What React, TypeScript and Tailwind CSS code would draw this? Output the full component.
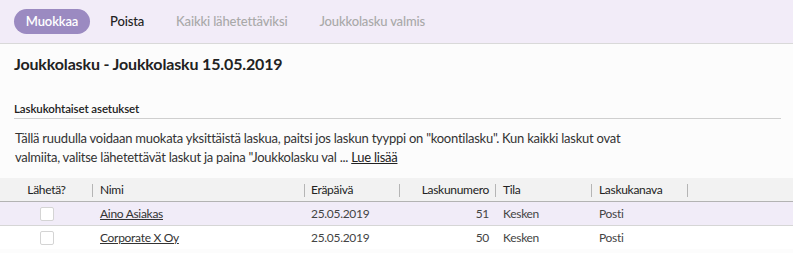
const rows = [
  { name: 'Aino Asiakas', due: '25.05.2019', num: '51', state: 'Kesken', channel: 'Posti' },
  { name: 'Corporate X Oy', due: '25.05.2019', num: '50', state: 'Kesken', channel: 'Posti' },
];

const cols = 'grid grid-cols-[93px_212px_95px_96px_96px_96px_1fr]';

function HeaderCell({ children, className = '' }: { children?: React.ReactNode; className?: string }) {
  return (
    <div className={`relative flex items-center h-full ${className}`}>
      {children}
      <span className="absolute right-0 top-[6px] h-[13px] w-px bg-[#b5b5b5]" />
    </div>
  );
}

export default function App() {
  return (
    <div className="w-[793px] h-[253px] bg-[#fcfcfc] text-[#333] font-['Lato','Noto_Sans',sans-serif] overflow-hidden">
      {/* toolbar */}
      <div className="h-[44px] bg-[#f2ecf8] border-b border-[#d9d9d9] flex items-center pl-[14px] text-[13px] tracking-[-0.15px]">
        <button className="h-[25px] w-[76px] rounded-full bg-[#9b8ac1] text-white font-semibold">Muokkaa</button>
        <span className="ml-[20px] text-[#222] font-medium">Poista</span>
        <span className="ml-[32px] text-[#a9a9a9] font-medium">Kaikki lähetettäviksi</span>
        <span className="ml-[32px] text-[#a9a9a9] font-medium">Joukkolasku valmis</span>
      </div>

      <div className="px-[14px]">
        <h1 className="mt-[9px] text-[16px] tracking-[-0.15px] font-bold text-[#222] leading-[22px]">
          Joukkolasku - Joukkolasku 15.05.2019
        </h1>
        <div className="mt-[25px] border-b border-[#cfcfcf] pb-[1px] mr-[-2px] text-[11.5px] tracking-[-0.1px] font-semibold text-[#222]">
          Laskukohtaiset asetukset
        </div>
        <p className="mt-[10px] pl-px text-[13px] tracking-[-0.25px] leading-[19px] text-[#333]">
          Tällä ruudulla voidaan muokata yksittäistä laskua, paitsi jos laskun tyyppi on "koontilasku". Kun kaikki laskut ovat
          <br />
          valmiita, valitse lähetettävät laskut ja paina "Joukkolasku val ... <span className="underline text-[#222]">Lue lisää</span>
        </p>
      </div>

      {/* table */}
      <div className="mt-[11px] text-[12px] tracking-[-0.3px]">
        <div className={`${cols} h-[24px] bg-[#f2f2f2] border-b border-[#b3b3b3] text-[#222]`}>
          <HeaderCell className="justify-center">Lähetä?</HeaderCell>
          <HeaderCell className="pl-[7px]">Nimi</HeaderCell>
          <HeaderCell className="pl-[6px]">Eräpäivä</HeaderCell>
          <HeaderCell className="justify-end pr-[7px]">Laskunumero</HeaderCell>
          <HeaderCell className="pl-[7px]">Tila</HeaderCell>
          <HeaderCell className="pl-[7px]">Laskukanava</HeaderCell>
          <div />
        </div>
        {rows.map((r, i) => (
          <div
            key={r.name}
            className={`${cols} items-center text-[#444] ${
              i === 0 ? 'h-[24px] bg-[#f1ecf8] border-b border-[#d6d6d6]' : 'h-[23px] bg-white'
            }`}
          >
            <div className="flex justify-center">
              <span className="w-[14px] h-[14px] rounded-[2px] border border-[#d4d4d4] bg-white" />
            </div>
            <div className="pl-[7px]">
              <span className="underline text-[#333]">{r.name}</span>
            </div>
            <div className="pl-[6px]">{r.due}</div>
            <div className="text-right pr-[7px]">{r.num}</div>
            <div className="pl-[7px]">{r.state}</div>
            <div className="pl-[7px]">{r.channel}</div>
            <div />
          </div>
        ))}
      </div>
    </div>
  );
}
